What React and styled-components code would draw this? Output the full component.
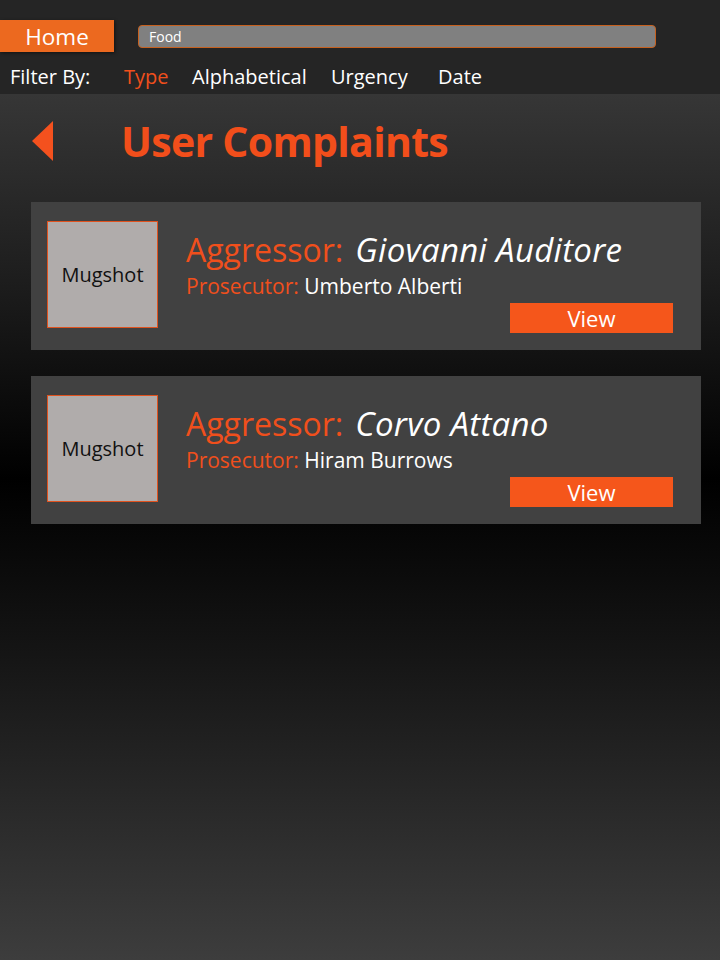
import React from "react";
import styled, { createGlobalStyle } from "styled-components";

const Global = createGlobalStyle`
  html, body { margin: 0; padding: 0; }
  body {
    font-family: "Open Sans", "Noto Sans", sans-serif;
    background: #252525;
  }
  #root { min-height: 960px; }
`;

const Page = styled.div`
  width: 720px;
  min-height: 960px;
  display: flex;
  flex-direction: column;
`;

const TopBar = styled.header`
  background: #252525;
  height: 94px;
  display: flex;
  flex-direction: column;
`;

const NavRow = styled.div`
  display: flex;
  align-items: center;
  margin-top: 20px;
  height: 32px;
`;

const HomeButton = styled.button`
  width: 114px;
  height: 32px;
  border: none;
  background: #ec691f;
  color: #fff;
  font-family: inherit;
  font-size: 22.5px;
  padding: 0;
  box-shadow: 1px 1px 3px rgba(0, 0, 0, 0.5);
`;

const Search = styled.div`
  margin-left: 24px;
  width: 518px;
  height: 23px;
  box-sizing: border-box;
  border: 1px solid #c7611f;
  border-radius: 4px;
  background: #808080;
  color: #fff;
  font-size: 14px;
  padding-left: 10px;
  display: flex;
  align-items: center;
`;

const FilterRow = styled.nav`
  display: grid;
  grid-template-columns: 114px 68px 139px 107px auto;
  padding-left: 10px;
  margin-top: 11px;
  font-size: 20px;
  color: #fff;
`;

const FilterItem = styled.span`
  color: ${(p) => (p.$active ? "#f04f1c" : "#ffffff")};
`;

const Main = styled.main`
  flex: 1;
  background: linear-gradient(
    to bottom,
    #363636 0px,
    #1e1e1e 180px,
    #000000 385px,
    #151515 560px,
    #3d3d3d 866px
  );
  padding: 0 19px 40px 31px;
`;

const TitleRow = styled.div`
  display: flex;
  align-items: center;
  height: 94px;
  margin-bottom: 14px;
`;

const BackArrow = styled.svg`
  width: 21px;
  height: 40px;
  margin-left: 1px;
`;

const Title = styled.h1`
  margin: -1px 0 0 68px;
  font-size: 41px;
  font-weight: 700;
  color: #f24e1b;
  letter-spacing: -0.7px;
`;

const CardList = styled.div`
  display: flex;
  flex-direction: column;
  gap: 26px;
`;

const Card = styled.article`
  background: #414141;
  height: 148px;
  box-sizing: border-box;
  padding: 19px 28px 17px 16px;
  display: flex;
`;

const Mugshot = styled.div`
  width: 111px;
  height: 107px;
  box-sizing: border-box;
  border: 1px solid #e0521e;
  background: #b0acab;
  color: #111;
  font-size: 20px;
  display: flex;
  align-items: center;
  justify-content: center;
`;

const Info = styled.div`
  flex: 1;
  margin-left: 28px;
  display: flex;
  flex-direction: column;
`;

const Aggressor = styled.div`
  font-size: 32px;
  line-height: 40px;
  height: 40px;
  margin-top: 9px;
  color: #f04f1c;
  white-space: nowrap;
`;

const Name = styled.span`
  color: #fff;
  font-style: italic;
  font-size: 33px;
  line-height: 40px;
  letter-spacing: 0.3px;
  margin-left: 12px;
`;

const Prosecutor = styled.div`
  font-size: 21px;
  line-height: 24px;
  margin-top: 4px;
  color: #f04f1c;
  white-space: nowrap;
`;

const Value = styled.span`
  color: #fff;
`;

const ViewButton = styled.button`
  align-self: flex-end;
  margin-top: auto;
  width: 163px;
  height: 30px;
  border: none;
  padding: 0;
  background: #f5561b;
  color: #fff;
  font-family: inherit;
  font-size: 22px;
  line-height: 30px;
`;

const complaints = [
  { aggressor: "Giovanni Auditore", prosecutor: "Umberto Alberti" },
  { aggressor: "Corvo Attano", prosecutor: "Hiram Burrows" },
];

export default function App() {
  return (
    <>
      <Global />
      <Page>
        <TopBar>
          <NavRow>
            <HomeButton>Home</HomeButton>
            <Search>Food</Search>
          </NavRow>
          <FilterRow>
            <FilterItem>Filter By:</FilterItem>
            <FilterItem $active>Type</FilterItem>
            <FilterItem>Alphabetical</FilterItem>
            <FilterItem>Urgency</FilterItem>
            <FilterItem>Date</FilterItem>
          </FilterRow>
        </TopBar>
        <Main>
          <TitleRow>
            <BackArrow viewBox="0 0 21 40">
              <polygon points="21,0 21,40 0,20" fill="#f4511e" />
            </BackArrow>
            <Title>User Complaints</Title>
          </TitleRow>
          <CardList>
            {complaints.map((c) => (
              <Card key={c.aggressor}>
                <Mugshot>Mugshot</Mugshot>
                <Info>
                  <Aggressor>
                    Aggressor:<Name>{c.aggressor}</Name>
                  </Aggressor>
                  <Prosecutor>
                    Prosecutor: <Value>{c.prosecutor}</Value>
                  </Prosecutor>
                  <ViewButton>View</ViewButton>
                </Info>
              </Card>
            ))}
          </CardList>
        </Main>
      </Page>
    </>
  );
}
